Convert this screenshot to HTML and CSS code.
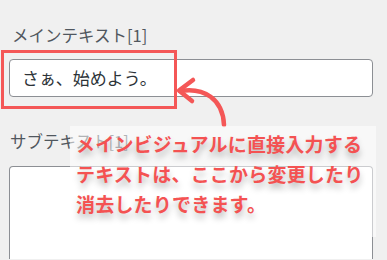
FILE: index.html
```html
<!DOCTYPE html>
<html lang="ja">
<head>
<meta charset="utf-8">
<link rel="stylesheet" href="styles.css">
</head>
<body>
<div class="panel">
  <div class="field">
    <label class="label">メインテキスト[1]</label>
    <div class="input">さぁ、始めよう。</div>
  </div>
  <div class="field field-sub">
    <label class="label">サブテキスト[1]</label>
    <div class="textarea"></div>
  </div>
</div>
<div class="frame"></div>
<svg class="arrow" width="60" height="55" viewBox="0 0 60 55">
  <path d="M10 16 C 34 12 53 24 54 50" fill="none" stroke="#f45757" stroke-width="4.5" stroke-linecap="round"/>
  <path d="M23 5 L9 15.5 L22 26" fill="none" stroke="#f45757" stroke-width="4.5" stroke-linecap="round" stroke-linejoin="round"/>
</svg>
<div class="note">
  <p class="note-text">メインビジュアルに直接入力する<br>テキストは、ここから変更したり<br>消去したりできます。</p>
</div>
</body>
</html>
```
FILE: styles.css
```css
html, body {
  margin: 0;
  padding: 0;
}
body {
  background: #f0f0f0;
  width: 387px;
  height: 260px;
  overflow: hidden;
  position: relative;
  font-family: "Noto Sans CJK JP", "Noto Sans", sans-serif;
}
.panel {
  padding: 24px 14px 0 9px;
  display: flex;
  flex-direction: column;
}
.field {
  display: flex;
  flex-direction: column;
}
.field-sub {
  margin-top: 33px;
}
.label {
  font-size: 16.5px;
  line-height: 22px;
  color: #50575e;
  padding-left: 3px;
  margin-bottom: 13px;
}
.field-sub .label {
  padding-left: 1px;
  margin-bottom: 14px;
}
.input {
  box-sizing: border-box;
  height: 38px;
  border: 1px solid #8c8f94;
  border-radius: 4px;
  background: #fff;
  padding: 0 12px;
  font-size: 17px;
  line-height: 36px;
  color: #2c3338;
}
.textarea {
  box-sizing: border-box;
  height: 93px;
  border: 1px solid #8c8f94;
  border-bottom: 0;
  border-radius: 4px 4px 0 0;
  background: #fff;
}
.frame {
  position: absolute;
  left: 1px;
  top: 50px;
  width: 176px;
  height: 59px;
  box-sizing: border-box;
  border: 3px solid #f45757;
}
.arrow {
  position: absolute;
  left: 170px;
  top: 75px;
}
.note {
  position: absolute;
  left: 70px;
  top: 126px;
  width: 306px;
  height: 111px;
  box-sizing: border-box;
  background: rgba(255, 255, 255, 0.55);
  padding: 3px 0 0 6px;
}
.note-text {
  margin: 0;
  font-size: 19px;
  line-height: 30px;
  letter-spacing: 0.2px;
  font-weight: 700;
  color: #f45252;
  text-shadow: 0 5px 6px rgba(0, 0, 0, 0.28);
  white-space: nowrap;
}
```
